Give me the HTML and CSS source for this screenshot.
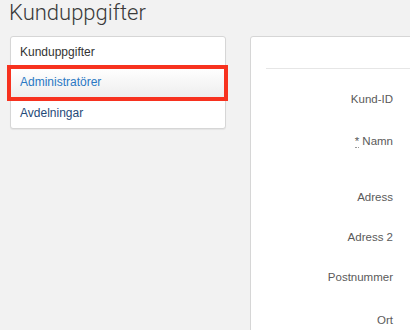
FILE: index.html
```
<!DOCTYPE html>
<html lang="sv">
<head>
    <meta charset="UTF-8">
    <title>Kunduppgifter</title>
    <link rel="stylesheet" href="styles.css">
</head>
<body>
    <h1 class="page-title">Kunduppgifter</h1>

    <div class="layout">
        <ul class="side-nav">
            <li class="nav-item">Kunduppgifter</li>
            <li class="nav-item active">Administratörer</li>
            <li class="nav-item link">Avdelningar</li>
        </ul>

        <div class="content-panel">
            <div class="panel-head"></div>
            <form class="form">
                <div class="form-row row-id"><label>Kund-ID</label></div>
                <div class="form-row row-name"><label><abbr class="req">*</abbr> Namn</label></div>
                <div class="form-row"><label>Adress</label></div>
                <div class="form-row"><label>Adress 2</label></div>
                <div class="form-row"><label>Postnummer</label></div>
                <div class="form-row row-last"><label>Ort</label></div>
            </form>
        </div>
    </div>
</body>
</html>
```

FILE: styles.css
```
html, body {
    margin: 0;
    padding: 0;
    overflow: hidden;
}
body {
    background-color: #f2f2f2;
    font-family: "Liberation Sans", Arial, sans-serif;
    color: #333;
    width: 410px;
    height: 330px;
}
.page-title {
    margin: 0;
    padding: 0 0 0 9px;
    font-family: Roboto, "Liberation Sans", sans-serif;
    font-weight: 300;
    font-size: 22px;
    line-height: 25px;
    color: #3a3a3a;
    height: 36px;
}
.layout {
    display: flex;
    align-items: flex-start;
    padding-left: 10px;
    gap: 24px;
}
.side-nav {
    list-style: none;
    margin: 0;
    padding: 0;
    width: 214px;
    flex-shrink: 0;
    background-color: #fff;
    border: 1px solid #d6d6d6;
    border-radius: 3px;
    box-shadow: 0 1px 1px rgba(0, 0, 0, 0.06);
}
.nav-item {
    height: 30px;
    line-height: 30px;
    padding-left: 9px;
    font-size: 12px;
    color: #333;
}
.nav-item.active {
    position: relative;
    color: #2a78c4;
    background: linear-gradient(#ffffff, #eeeeee);
    border-top: 1px solid #dcdcdc;
    border-bottom: 1px solid #cfcfcf;
    height: 29px;
    line-height: 29px;
}
.nav-item.active::after {
    content: "";
    position: absolute;
    left: -4px;
    right: -3px;
    top: -3px;
    bottom: -4px;
    border: 4px solid #f7321f;
}
.nav-item.link {
    color: #1f4a78;
}
.content-panel {
    flex-shrink: 0;
    width: 400px;
    height: 320px;
    background-color: #fff;
    border: 1px solid #d6d6d6;
    border-radius: 3px;
    padding: 0 15px;
}
.panel-head {
    height: 31px;
    border-bottom: 1px solid #e6e6e6;
}
.form-row {
    display: flex;
    align-items: center;
    height: 40px;
}
.form-row label {
    width: 127px;
    text-align: right;
    font-size: 11.5px;
    color: #5a5a5a;
}
.row-id {
    margin-top: 10px;
}
.row-name {
    height: 44px;
    margin-bottom: 14px;
}
.row-last {
    margin-top: 3px;
}
.req {
    text-decoration: none;
    border-bottom: 1px dotted #999;
}
```
